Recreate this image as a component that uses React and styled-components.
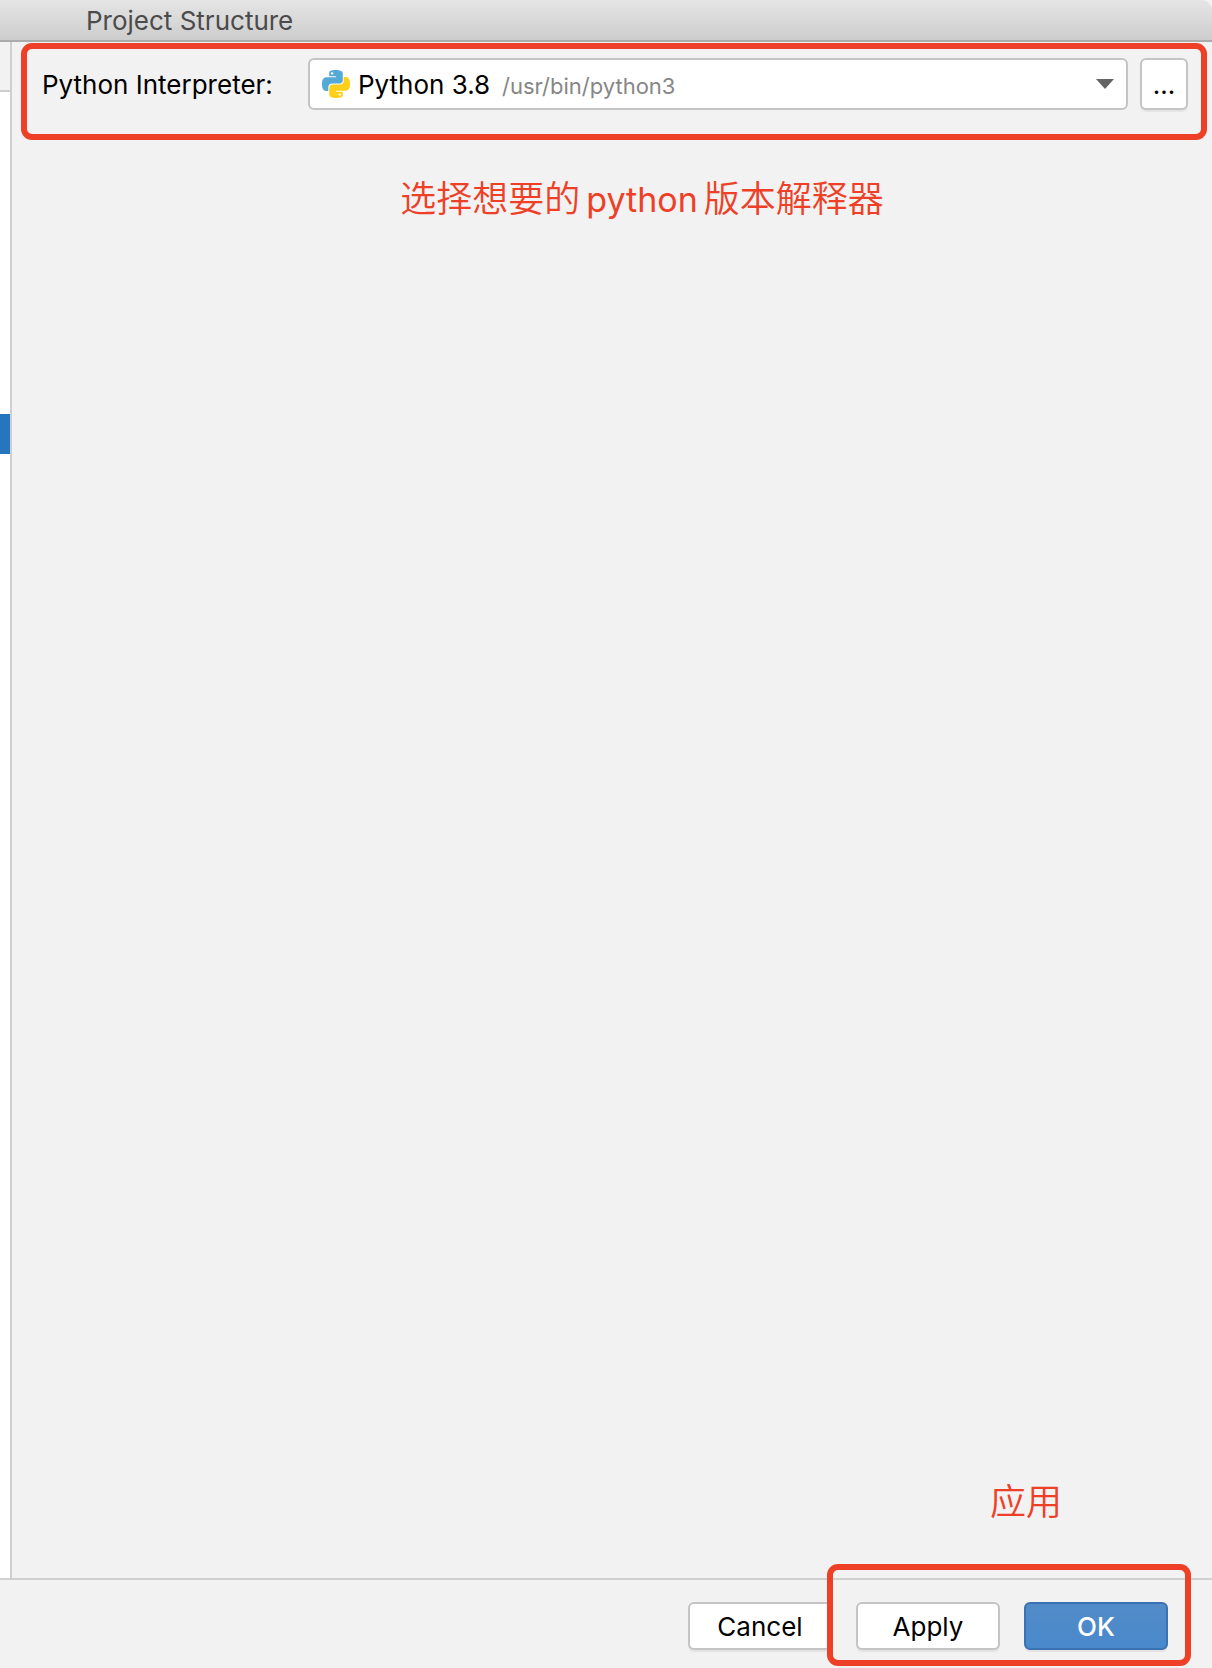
import React, { useState } from "react";
import styled, { createGlobalStyle } from "styled-components";

const GlobalStyle = createGlobalStyle`
  * {
    box-sizing: border-box;
  }
  body {
    margin: 0;
    background: #f2f2f2;
    color: #000;
    font-family: Inter, "Noto Sans CJK SC", sans-serif;
  }
`;

const Dialog = styled.div`
  display: flex;
  flex-direction: column;
  min-height: 100vh;
`;

const TitleBar = styled.header`
  height: 42px;
  padding-left: 86px;
  background: linear-gradient(#e5e5e5, #cdcdcd);
  border-bottom: 2px solid #ababab;
  border-top-right-radius: 10px;
`;

const Title = styled.h1`
  margin: 0;
  color: #4b4b4b;
  font-size: 26px;
  font-weight: 400;
  line-height: 42px;
`;

const Body = styled.div`
  flex: 1;
  display: flex;
`;

const Sidebar = styled.aside`
  width: 12px;
  display: flex;
  flex-direction: column;
  background: #fff;
  border-right: 2px solid #cfcfcf;
`;

const SidebarHead = styled.div`
  height: 50px;
  background: #f2f2f2;
  border-bottom: 2px solid #cfcfcf;
`;

const SidebarSelection = styled.div`
  height: 40px;
  margin-top: 322px;
  background: #2675bf;
`;

const Content = styled.main`
  flex: 1;
  display: flex;
  flex-direction: column;
  padding: 1px 5px 0 9px;
`;

const InterpreterRow = styled.section`
  display: flex;
  align-items: center;
  gap: 12px;
  padding: 9px 13px 24px 15px;
  border: 6px solid #ee4026;
  border-radius: 11px;
`;

const Label = styled.label`
  width: 254px;
  padding-top: 2px;
  font-size: 26px;
  line-height: 50px;
  white-space: nowrap;
`;

const ComboBox = styled.div`
  flex: 1;
  display: grid;
`;

const Select = styled.select`
  grid-area: 1 / 1;
  width: 100%;
  height: 52px;
  padding: 0 0 0 48px;
  appearance: none;
  color: #000;
  background: #fff;
  border: 2px solid #c4c4c4;
  border-radius: 6px;
  font-family: inherit;
  font-size: 26px;
`;

const ComboFace = styled.div`
  grid-area: 1 / 1;
  z-index: 1;
  display: flex;
  align-items: center;
  padding: 0 14px;
  pointer-events: none;
`;

const Path = styled.span`
  flex: 1;
  margin-left: 152px;
  padding-top: 4px;
  color: #868686;
  font-size: 22px;
  line-height: 48px;
`;

const Button = styled.button`
  width: ${(props) => (props.$small ? "48px" : "144px")};
  height: ${(props) => (props.$small ? "52px" : "48px")};
  padding: 0;
  color: ${(props) => (props.$primary ? "#fff" : "#000")};
  background: ${(props) =>
    props.$primary ? "linear-gradient(#528bc8, #4989cc)" : "#fff"};
  border: 2px solid ${(props) => (props.$primary ? "#3b72b3" : "#c4c4c4")};
  border-radius: 6px;
  box-shadow: 0 2px 1px #e3e3e3;
  font-family: inherit;
  font-size: 26px;
  font-weight: ${(props) => (props.$primary ? 500 : 400)};
`;

const Note = styled.p`
  margin: 0;
  color: #ee4026;
  font-family: "Noto Sans CJK SC", sans-serif;
  font-size: 36px;
  font-weight: 350;
  line-height: 52px;
`;

const InterpreterNote = styled(Note)`
  margin-top: 30px;
  padding-left: 56px;
  text-align: center;
`;

const Latin = styled.span`
  margin: 0 6px;
  font-family: Inter, sans-serif;
  font-size: 34px;
  font-weight: 400;
`;

const ApplyNote = styled(Note)`
  margin: auto 145px 53px 0;
  text-align: right;
`;

const Footer = styled.footer`
  display: flex;
  justify-content: flex-end;
  gap: 24px;
  padding: 22px 44px 18px;
  border-top: 2px solid #d0d0d0;
`;

const ConfirmGroup = styled.div`
  position: relative;
  display: flex;
  gap: 24px;

  &::after {
    content: "";
    position: absolute;
    inset: -38px -23px -16px -29px;
    border: 6px solid #ee4026;
    border-radius: 11px;
    pointer-events: none;
  }
`;

const snake =
  "M14.25.18l.9.2.73.26.59.3.45.32.34.34.25.34.16.33.1.3.04.26.02.2-.01.13V8.5l-.05.63-.13.55-.21.46-.26.38-.3.31-.33.25-.35.19-.35.14-.33.1-.3.07-.26.04-.21.02H8.77l-.69.05-.59.14-.5.22-.41.27-.33.32-.27.35-.2.36-.15.37-.1.35-.07.32-.04.27-.02.21v3.06H3.17l-.21-.03-.28-.07-.32-.12-.35-.18-.36-.26-.36-.36-.35-.46-.32-.59-.28-.73-.21-.88-.14-1.05-.05-1.23.06-1.22.16-1.04.24-.87.32-.71.36-.57.4-.44.42-.33.42-.24.4-.16.36-.1.32-.05.24-.01h.16l.06.01h8.16v-.83H6.18l-.01-2.75-.02-.37.05-.34.11-.31.17-.28.25-.26.31-.23.38-.2.44-.18.51-.15.58-.12.64-.1.71-.06.77-.04.84-.02 1.27.05zm-6.3 1.98l-.23.33-.08.41.08.41.23.34.33.22.41.09.41-.09.33-.22.23-.34.08-.41-.08-.41-.23-.33-.33-.22-.41-.09-.41.09z";

const PythonIcon = () => (
  <svg width="28" height="28" viewBox="0 0 24 24" aria-hidden="true">
    <path d={snake} fill="#54a9d6" />
    <path d={snake} fill="#ffd01b" transform="rotate(180 12 12)" />
  </svg>
);

const ArrowIcon = () => (
  <svg width="18" height="10" viewBox="0 0 18 10" aria-hidden="true">
    <path d="M0 0h18l-9 10z" fill="#646464" />
  </svg>
);

const App = () => {
  const [interpreter, setInterpreter] = useState("/usr/bin/python3");

  return (
    <>
      <GlobalStyle />
      <Dialog>
        <TitleBar>
          <Title>Project Structure</Title>
        </TitleBar>
        <Body>
          <Sidebar>
            <SidebarHead />
            <SidebarSelection />
          </Sidebar>
          <Content>
            <InterpreterRow>
              <Label htmlFor="interpreter">Python Interpreter:</Label>
              <ComboBox>
                <Select
                  id="interpreter"
                  value={interpreter}
                  onChange={(e) => setInterpreter(e.target.value)}
                >
                  <option value="/usr/bin/python3">Python 3.8</option>
                </Select>
                <ComboFace>
                  <PythonIcon />
                  <Path>{interpreter}</Path>
                  <ArrowIcon />
                </ComboFace>
              </ComboBox>
              <Button type="button" $small>
                ...
              </Button>
            </InterpreterRow>
            <InterpreterNote>
              选择想要的<Latin>python</Latin>版本解释器
            </InterpreterNote>
            <ApplyNote>应用</ApplyNote>
          </Content>
        </Body>
        <Footer>
          <Button type="button">Cancel</Button>
          <ConfirmGroup>
            <Button type="button">Apply</Button>
            <Button type="button" $primary>
              OK
            </Button>
          </ConfirmGroup>
        </Footer>
      </Dialog>
    </>
  );
};

export default App;
